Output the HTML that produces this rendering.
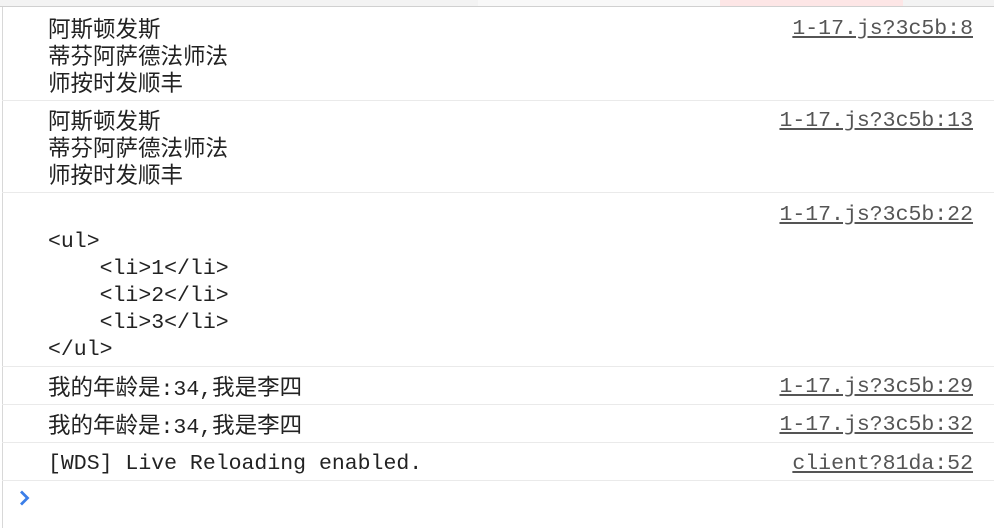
<!DOCTYPE html>
<html><head><meta charset="utf-8"><style>
body{margin:0;width:994px;height:528px;background:#fff;position:relative;overflow:hidden;font-family:"Liberation Mono","Noto Sans CJK SC",monospace;font-size:21.5px;color:#222;}
.t{position:absolute;left:48px;line-height:27px;white-space:pre;}
.c{font-family:"Noto Sans CJK SC","WenQuanYi Zen Hei",sans-serif;font-size:22.5px;}
.l{position:absolute;right:21px;line-height:27px;color:#555;text-decoration:underline;white-space:pre;}
.h{position:absolute;left:2px;right:0;height:1px;background:#eaeaea;}
</style></head><body>
<div style="position:absolute;left:0;top:0;width:994px;height:6px;background:#f3f3f3"></div>
<div style="position:absolute;left:478px;top:0;width:242px;height:6px;background:#f8f8f8"></div>
<div style="position:absolute;left:720px;top:0;width:183px;height:6px;background:#fde6e6"></div>
<div style="position:absolute;left:0;top:6px;width:994px;height:1px;background:#d0d0d0"></div>
<div style="position:absolute;left:2px;top:7px;width:1px;height:521px;background:#d8d8d8"></div>

<div class="t c" style="top:15px">阿斯顿发斯
蒂芬阿萨德法师法
师按时发顺丰</div>
<div class="l" style="top:16px">1-17.js?3c5b:8</div>
<div class="h" style="top:100px"></div>
<div class="t c" style="top:107px">阿斯顿发斯
蒂芬阿萨德法师法
师按时发顺丰</div>
<div class="l" style="top:108px">1-17.js?3c5b:13</div>
<div class="h" style="top:192px"></div>
<div class="l" style="top:202px">1-17.js?3c5b:22</div>
<div class="t" style="top:229px">&lt;ul&gt;
    &lt;li&gt;1&lt;/li&gt;
    &lt;li&gt;2&lt;/li&gt;
    &lt;li&gt;3&lt;/li&gt;
&lt;/ul&gt;</div>
<div class="h" style="top:366px"></div>
<div class="t" style="top:373px"><span class="c">我的年龄是</span>:34,<span class="c">我是李四</span></div>
<div class="l" style="top:374px">1-17.js?3c5b:29</div>
<div class="h" style="top:404px"></div>
<div class="t" style="top:411px"><span class="c">我的年龄是</span>:34,<span class="c">我是李四</span></div>
<div class="l" style="top:412px">1-17.js?3c5b:32</div>
<div class="h" style="top:442px"></div>
<div class="t" style="top:451px">[WDS] Live Reloading enabled.</div>
<div class="l" style="top:451px">client?81da:52</div>
<div class="h" style="top:480px"></div>
<svg style="position:absolute;left:18px;top:489px" width="14" height="18" viewBox="0 0 14 18"><path d="M3 2.5 L9.5 9 L3 15.5" fill="none" stroke="#3b7ee8" stroke-width="2.8"/></svg>
</body></html>
